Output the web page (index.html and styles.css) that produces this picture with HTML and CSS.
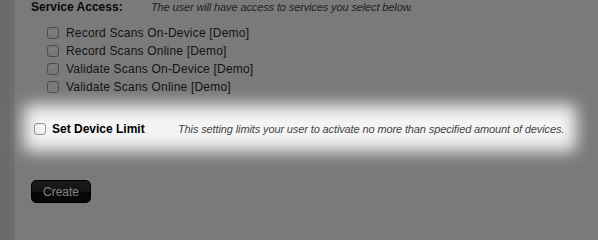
FILE: index.html
```html
<!DOCTYPE html>
<html>
<head>
<meta charset="utf-8">
<link rel="stylesheet" href="styles.css">
</head>
<body>
<div class="frame">
  <div class="page">
    <div class="head-row">
      <div class="head-label">Service Access:</div>
      <div class="hint">The user will have access to services you select below.</div>
    </div>
    <ul class="services">
      <li class="svc"><input type="checkbox" class="cb"><span>Record Scans On-Device [Demo]</span></li>
      <li class="svc"><input type="checkbox" class="cb"><span>Record Scans Online [Demo]</span></li>
      <li class="svc"><input type="checkbox" class="cb"><span>Validate Scans On-Device [Demo]</span></li>
      <li class="svc"><input type="checkbox" class="cb"><span>Validate Scans Online [Demo]</span></li>
    </ul>
    <div class="limit-row">
      <input type="checkbox" class="cb">
      <span class="limit-label">Set Device Limit</span>
      <span class="hint limit-hint">This setting limits your user to activate no more than specified amount of devices.</span>
      <div class="spot"></div>
    </div>
    <div class="actions">
      <button class="btn">Create</button>
    </div>
  </div>
</div>
</body>
</html>
```
FILE: styles.css
```css
html, body {
  margin: 0;
  padding: 0;
  height: 100%;
  overflow: hidden;
  background: #6e6e6e;
}
body {
  font-family: "Liberation Sans", Arial, Helvetica, sans-serif;
  color: #2b2b2b;
}
.frame {
  position: relative;
  height: 100%;
  min-height: 217px;
  overflow: hidden;
  padding-left: 15px;
  background: linear-gradient(to right, #d4d4d4 0, #d8d8d8 9px, #e4e4e4 15px);
}
.page {
  height: 100%;
  background: #f4f4f4;
  padding-left: 16px;
}
.head-row {
  display: flex;
  align-items: baseline;
  height: 14px;
  line-height: 14px;
}
.head-label {
  width: 120px;
  font-size: 12px;
  font-weight: bold;
  color: #111;
}
.hint {
  font-size: 11px;
  font-style: italic;
  color: #444;
  letter-spacing: -0.12px;
}
.services {
  list-style: none;
  margin: 10px 0 0 0;
  padding: 0 0 0 16px;
}
.svc {
  display: flex;
  align-items: center;
  height: 18px;
  font-size: 12px;
  letter-spacing: 0.2px;
}
.cb {
  appearance: none;
  -webkit-appearance: none;
  margin: 0;
  width: 12px;
  height: 12px;
  border: 1px solid #9a9a9a;
  border-radius: 3px;
  background: linear-gradient(#ffffff, #ececec);
  box-shadow: inset 0 1px 1px rgba(0,0,0,0.08);
  box-sizing: border-box;
  flex: none;
}
.svc .cb {
  margin-right: 7px;
}
.limit-row {
  position: relative;
  display: flex;
  align-items: center;
  height: 20px;
  margin: 23px 0 0 3px;
}
.limit-label {
  margin-left: 6px;
  width: 126px;
  font-size: 12px;
  font-weight: bold;
  color: #000;
}
.spot {
  position: absolute;
  left: -10px;
  top: -14px;
  right: 22px;
  bottom: -12px;
  box-shadow: 0 0 0 1000px rgba(0,0,0,0.5);
  filter: blur(8px);
  pointer-events: none;
  z-index: 10;
}
.actions {
  margin-top: 41px;
}
.btn {
  width: 60px;
  height: 23px;
  padding: 0;
  border: 1px solid #000;
  border-radius: 5px;
  background: linear-gradient(#363636 0, #2a2a2a 50%, #0c0c0c 50%, #111 100%);
  color: #fff;
  font-family: "Liberation Sans", Arial, Helvetica, sans-serif;
  font-size: 12px;
}
```
